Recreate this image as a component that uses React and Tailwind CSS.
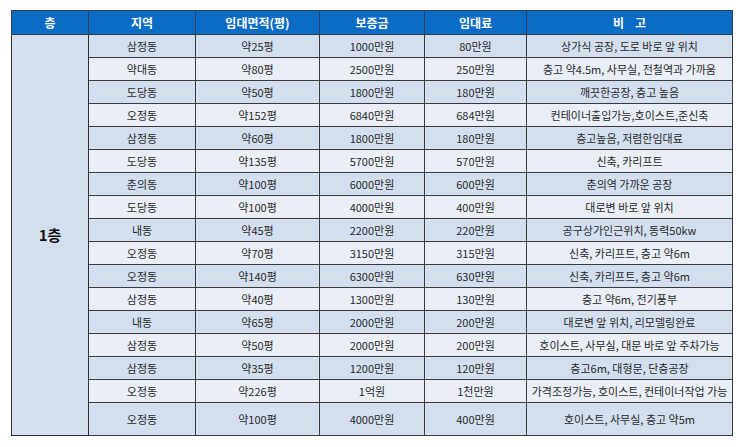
const rows = [
  ["삼정동", "약25평", "1000만원", "80만원", "상가식 공장, 도로 바로 앞 위치"],
  ["약대동", "약80평", "2500만원", "250만원", "층고 약4.5m, 사무실, 전철역과 가까움"],
  ["도당동", "약50평", "1800만원", "180만원", "깨끗한공장, 층고 높음"],
  ["오정동", "약152평", "6840만원", "684만원", "컨테이너출입가능,호이스트,준신축"],
  ["삼정동", "약60평", "1800만원", "180만원", "층고높음, 저렴한임대료"],
  ["도당동", "약135평", "5700만원", "570만원", "신축, 카리프트"],
  ["춘의동", "약100평", "6000만원", "600만원", "춘의역 가까운 공장"],
  ["도당동", "약100평", "4000만원", "400만원", "대로변 바로 앞 위치"],
  ["내동", "약45평", "2200만원", "220만원", "공구상가인근위치, 동력50kw"],
  ["오정동", "약70평", "3150만원", "315만원", "신축, 카리프트, 층고 약6m"],
  ["오정동", "약140평", "6300만원", "630만원", "신축, 카리프트, 층고 약6m"],
  ["삼정동", "약40평", "1300만원", "130만원", "층고 약6m, 전기풍부"],
  ["내동", "약65평", "2000만원", "200만원", "대로변 앞 위치, 리모델링완료"],
  ["삼정동", "약50평", "2000만원", "200만원", "호이스트, 사무실, 대문 바로 앞 주차가능"],
  ["삼정동", "약35평", "1200만원", "120만원", "층고6m, 대형문, 단층공장"],
  ["오정동", "약226평", "1억원", "1천만원", "가격조정가능, 호이스트, 컨테이너작업 가능"],
  ["오정동", "약100평", "4000만원", "400만원", "호이스트, 사무실, 층고 약5m"],
];

const headers = ["층", "지역", "임대면적(평)", "보증금", "임대료", "비    고"];

export default function App() {
  return (
    <div
      className="w-[743px] h-[447px] bg-white pl-[11px] pt-[10px]"
      style={{ fontFamily: '"Noto Sans CJK KR", "Noto Sans", sans-serif' }}
    >
      <table className="table-fixed border-collapse border border-[#2f2f2f] text-[11px] text-[#2a2a2a]">
        <colgroup>
          <col className="w-[77px]" />
          <col className="w-[107px]" />
          <col className="w-[124px]" />
          <col className="w-[105px]" />
          <col className="w-[102px]" />
          <col className="w-[206px]" />
        </colgroup>
        <thead>
          <tr className="h-[24px] bg-[#0b6cc6]">
            {headers.map((h, i) => (
              <th
                key={i}
                className="border border-[#2f3f55] p-0 text-center text-[12px] font-bold text-white whitespace-pre leading-none"
              >
                {h}
              </th>
            ))}
          </tr>
        </thead>
        <tbody>
          {rows.map((r, i) => (
            <tr
              key={i}
              className={`${i === rows.length - 1 ? "h-[33px]" : "h-[23px]"} ${i % 2 === 0 ? "bg-[#d3deef]" : "bg-[#e9eef7]"}`}
            >
              {i === 0 && (
                <td
                  rowSpan={rows.length}
                  className="border border-[#2f2f2f] bg-[#d3deef] p-0 text-center text-[15px] font-bold text-[#111]"
                >
                  1층
                </td>
              )}
              {r.map((c, j) => (
                <td key={j} className="border border-[#3a3a3a] p-0 text-center leading-none whitespace-nowrap">
                  {c}
                </td>
              ))}
            </tr>
          ))}
        </tbody>
      </table>
    </div>
  );
}
